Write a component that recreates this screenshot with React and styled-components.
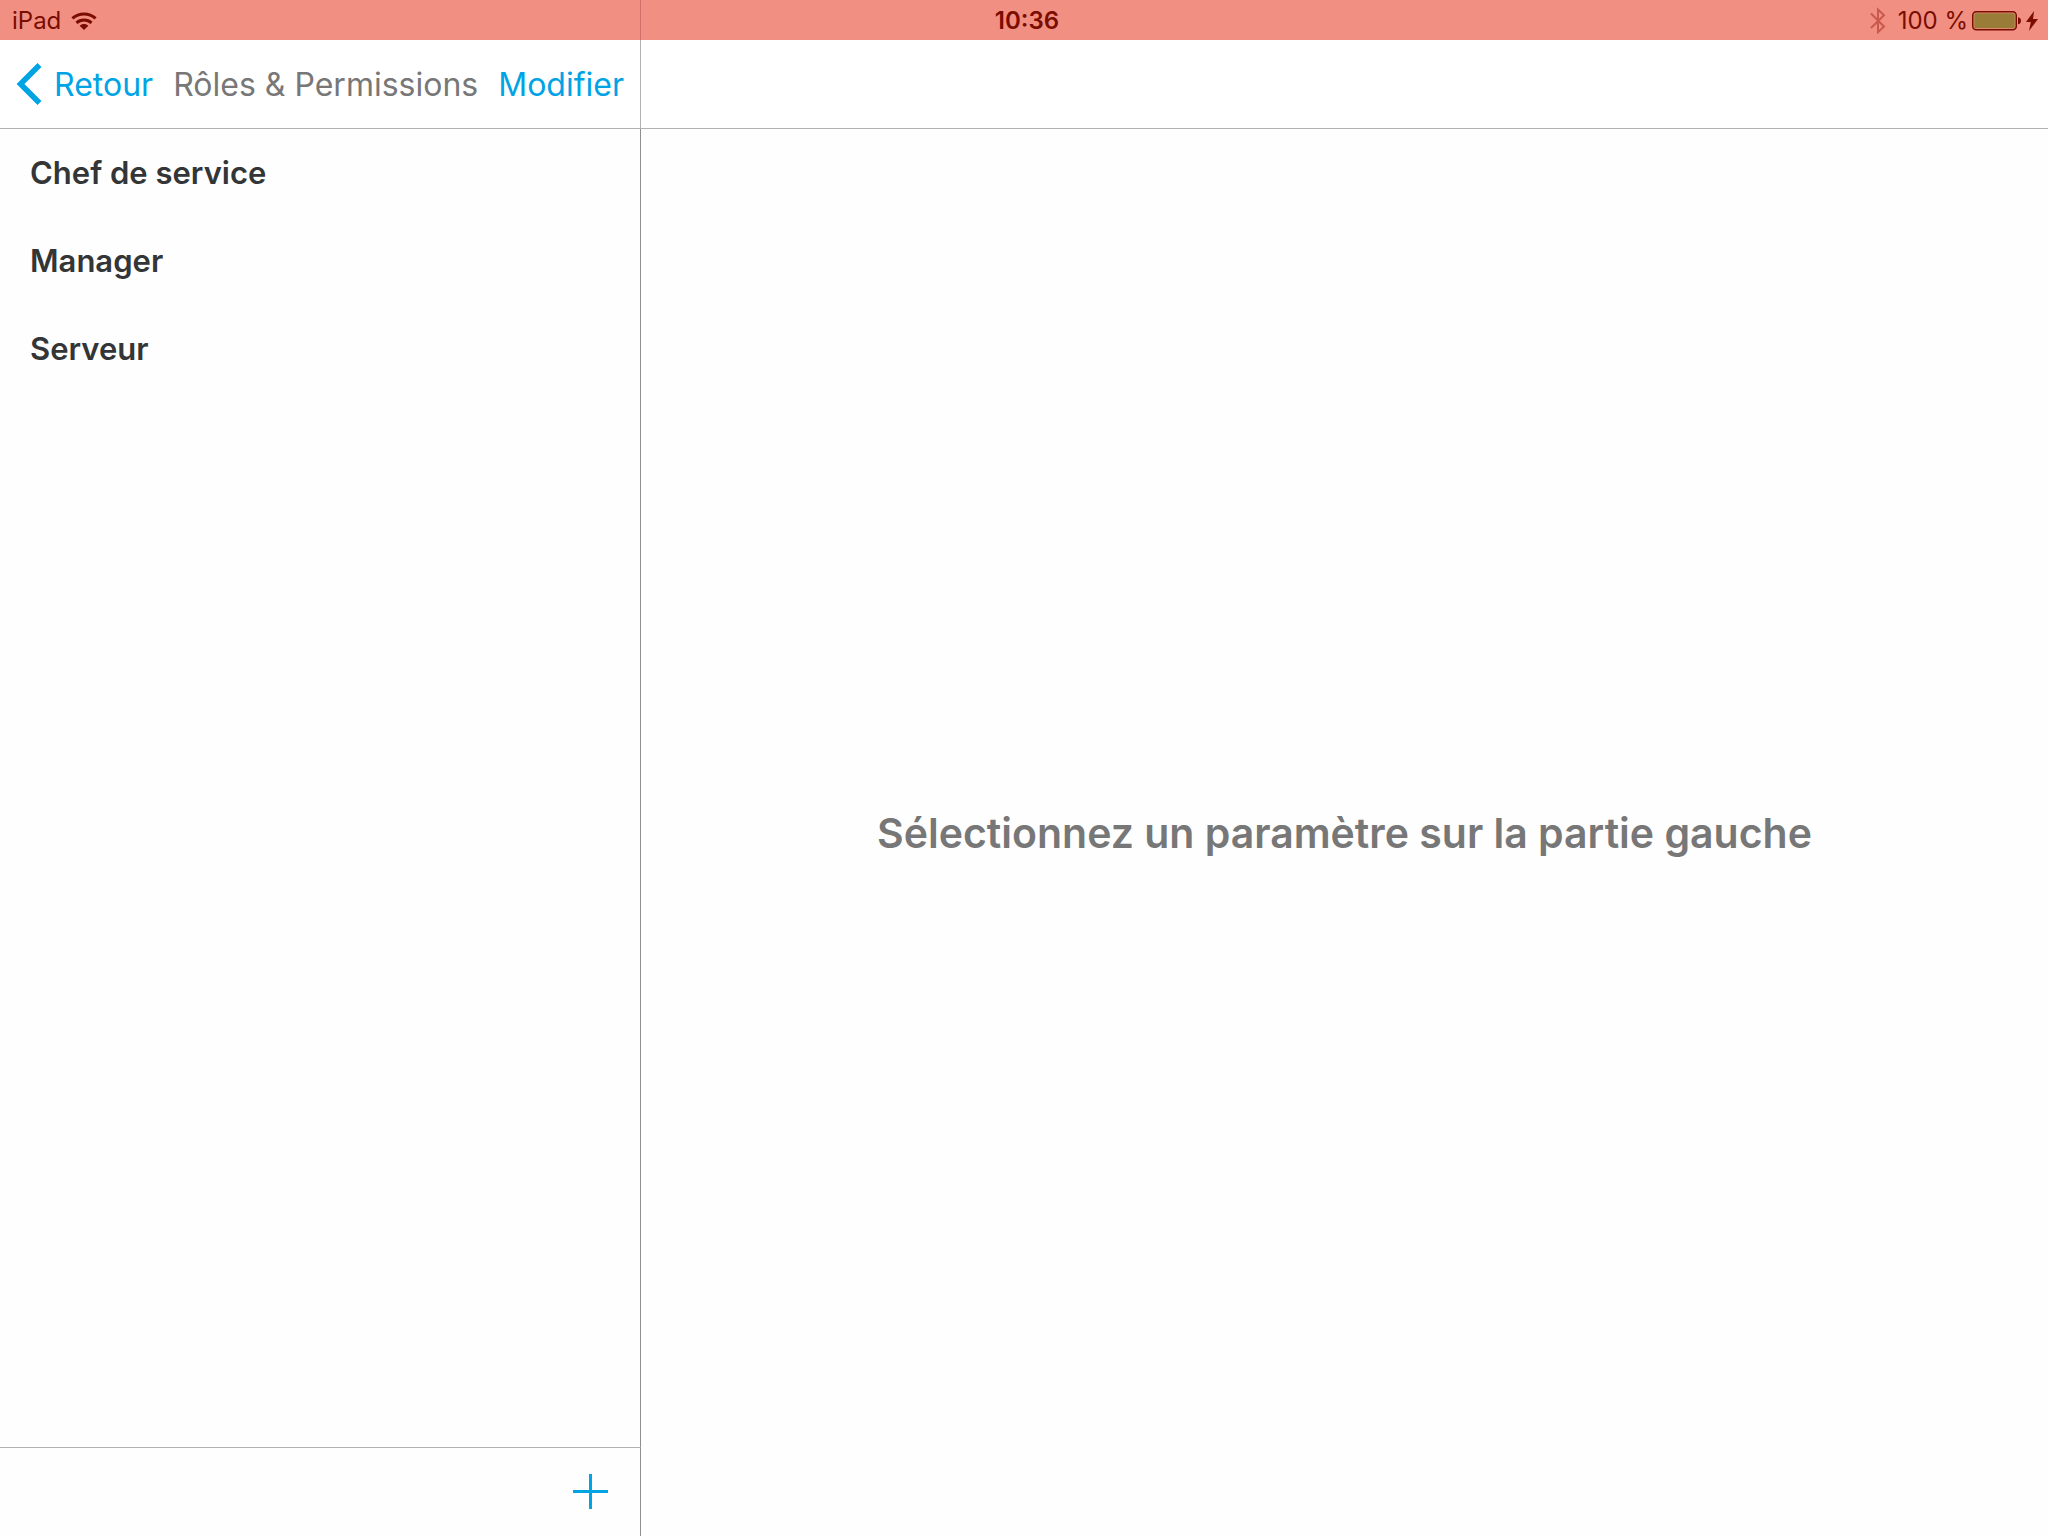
import React from "react";
import styled, { createGlobalStyle } from "styled-components";

const ACCENT = "#00a3e4";
const MUTED = "#777777";
const STATUS_INK = "#7a0c00";
const HAIRLINE = "#b2b2b2";
const DIVIDER = "#8e8e93";

const GlobalStyle = createGlobalStyle`
  *, *::before, *::after { box-sizing: border-box; }
  body {
    margin: 0;
    background: #fefefe;
    font-family: Inter, "Noto Sans", sans-serif;
    color: #333536;
  }
  h1, h2, p, ul { margin: 0; padding: 0; }
  button { border: 0; padding: 0; background: none; font: inherit; color: inherit; cursor: pointer; }
`;

const Screen = styled.div`
  display: grid;
  grid-template-columns: minmax(0, 641px) minmax(0, 1fr);
  grid-template-rows: auto 1fr;
  min-height: 100vh;
`;

const StatusBar = styled.header`
  grid-column: 1 / -1;
  display: grid;
  grid-template-columns: minmax(0, 641px) minmax(0, 1fr);
  position: relative;
  height: 40px;
  background: #f28f83;
  color: ${STATUS_INK};
  font-size: 24px;
  line-height: 40px;
`;

const StatusDivider = styled.span`
  border-right: 1px solid #cf7068;
`;

const StatusContent = styled.div`
  position: absolute;
  inset: 0;
  display: grid;
  grid-template-columns: 1fr auto 1fr;
  align-items: center;
  padding: 1px 10px 0 12px;
`;

const StatusGroup = styled.div`
  display: flex;
  align-items: center;
  justify-content: ${(p) => (p.$end ? "flex-end" : "flex-start")};
  gap: ${(p) => (p.$end ? "4px" : "10px")};
`;

const Level = styled.span`
  padding-left: 8px;
`;

const Clock = styled.time`
  padding-left: 4px;
  font-weight: 600;
`;

const Sidebar = styled.aside`
  display: flex;
  flex-direction: column;
`;

const NavBar = styled.div`
  display: flex;
  align-items: center;
  justify-content: space-between;
  height: 89px;
  padding: 0 16px;
  background: #fff;
  border-bottom: 1px solid ${HAIRLINE};
  border-right: ${(p) => (p.$divided ? `1px solid ${HAIRLINE}` : "0")};
  font-size: 32px;
  line-height: 40px;
  white-space: nowrap;
`;

const NavButton = styled.button`
  display: flex;
  align-items: center;
  gap: 12px;
  color: ${ACCENT};
`;

const NavLabel = styled.span`
  padding-top: 2px;
`;

const NavTitle = styled.h1`
  padding-top: 2px;
  font-size: inherit;
  font-weight: 400;
  color: ${MUTED};
`;

const RoleList = styled.ul`
  flex: 1;
  list-style: none;
  border-right: 1px solid ${DIVIDER};
`;

const RoleButton = styled.button`
  display: block;
  width: 100%;
  height: 88px;
  padding: 0 30px 2px;
  text-align: left;
  font-size: 31px;
  font-weight: 600;
`;

const Toolbar = styled.footer`
  display: flex;
  align-items: center;
  justify-content: flex-end;
  height: 89px;
  padding: 0 32px;
  border-top: 1px solid ${HAIRLINE};
  border-right: 1px solid ${DIVIDER};
`;

const AddButton = styled.button`
  display: flex;
  height: 36px;
  color: ${ACCENT};
`;

const Detail = styled.main`
  display: flex;
  flex-direction: column;
`;

const Placeholder = styled.div`
  flex: 1;
  display: flex;
  align-items: center;
  justify-content: center;
  text-align: center;
  font-size: 41px;
  line-height: 52px;
  font-weight: 600;
  color: ${MUTED};
`;

const WifiIcon = () => (
  <svg width="26" height="18" viewBox="0 0 26 18" fill="none" stroke="currentColor" strokeWidth="3" aria-label="Wi-Fi">
    <path d="M1.400 6.400C8 .4 18 .4 24.600 6.400" />
    <path d="M5.400 10.800C9.800 6.900 16.200 6.900 20.600 10.800" />
    <path d="M13 18L8.600 13.700C11 11.400 15 11.400 17.400 13.700Z" fill="currentColor" stroke="none" />
  </svg>
);

const BluetoothIcon = () => (
  <svg width="16" height="28" viewBox="0 0 16 28" fill="none" stroke="#c9584d" strokeWidth="2" aria-label="Bluetooth">
    <path d="M1 6.500L14 19.500L8 25.200V2.500L14 8.300L1 21" />
  </svg>
);

const BatteryIcon = () => (
  <svg width="50" height="20" viewBox="0 0 50 20" aria-hidden="true">
    <rect x="0.750" y="0.750" width="43.500" height="18" rx="3.500" fill="none" stroke={STATUS_INK} strokeWidth="1.500" />
    <rect x="2.250" y="2.250" width="40.500" height="15" rx="1.500" fill="#987c38" />
    <path d="M46 6.200C50 6.700 50 12.800 46 13.300Z" fill={STATUS_INK} />
  </svg>
);

const BoltIcon = () => (
  <svg width="12" height="20" viewBox="0 0 12 20" fill="currentColor" aria-label="En charge">
    <path d="M8 0L0 11H4.800L3 20L12 8H7Z" />
  </svg>
);

const ChevronIcon = () => (
  <svg width="26" height="42" viewBox="0 0 26 42" fill="none" stroke="currentColor" strokeWidth="5.500" aria-hidden="true">
    <path d="M23.500 2L4.500 21L23.500 40" />
  </svg>
);

const PlusIcon = () => (
  <svg width="35" height="35" viewBox="0 0 35 35" fill="currentColor" aria-hidden="true">
    <path d="M16 0H19V16H35V19H19V35H16V19H0V16H16Z" />
  </svg>
);

const roles = ["Chef de service", "Manager", "Serveur"];

export default function App() {
  return (
    <>
      <GlobalStyle />
      <Screen>
        <StatusBar>
          <StatusDivider />
          <StatusContent>
            <StatusGroup>
              <span>iPad</span>
              <WifiIcon />
            </StatusGroup>
            <Clock>10:36</Clock>
            <StatusGroup $end>
              <BluetoothIcon />
              <Level>100 %</Level>
              <BatteryIcon />
              <BoltIcon />
            </StatusGroup>
          </StatusContent>
        </StatusBar>
        <Sidebar>
          <NavBar $divided>
            <NavButton type="button">
              <ChevronIcon />
              <NavLabel>Retour</NavLabel>
            </NavButton>
            <NavTitle>Rôles &amp; Permissions</NavTitle>
            <NavButton type="button">
              <NavLabel>Modifier</NavLabel>
            </NavButton>
          </NavBar>
          <RoleList>
            {roles.map((role) => (
              <li key={role}>
                <RoleButton type="button">{role}</RoleButton>
              </li>
            ))}
          </RoleList>
          <Toolbar>
            <AddButton type="button" aria-label="Ajouter un rôle">
              <PlusIcon />
            </AddButton>
          </Toolbar>
        </Sidebar>
        <Detail>
          <NavBar />
          <Placeholder>
            <p>Sélectionnez un paramètre sur la partie gauche</p>
          </Placeholder>
        </Detail>
      </Screen>
    </>
  );
}
